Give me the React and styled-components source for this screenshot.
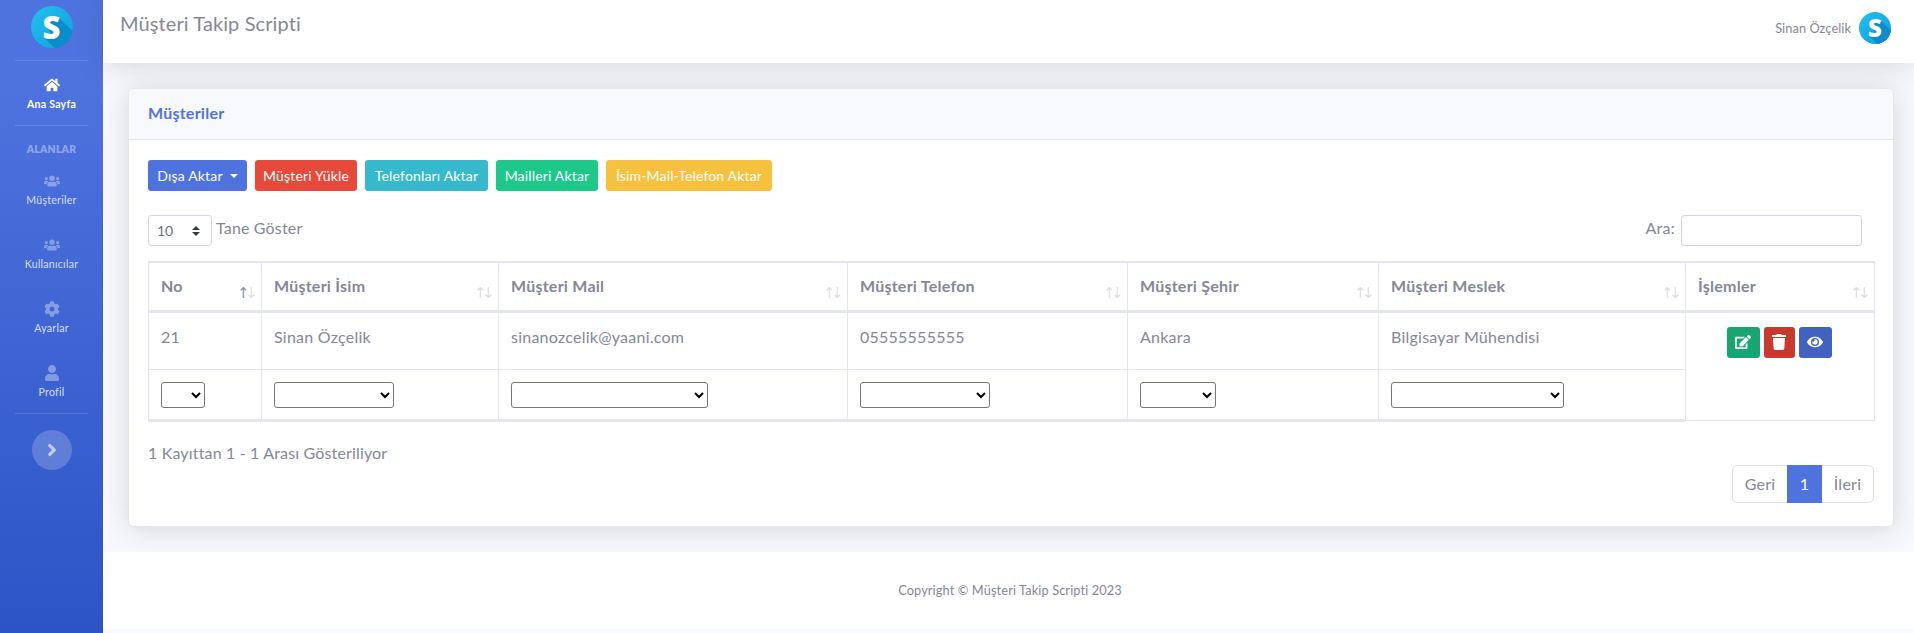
import React from 'react';
import styled, { createGlobalStyle } from 'styled-components';
import { FaHome, FaUsers, FaCog, FaUser, FaAngleRight, FaEdit, FaTrash, FaEye } from 'react-icons/fa';

const Global = createGlobalStyle`
  html, body { margin: 0; padding: 0; }
  body { font-family: "Lato", "Open Sans", "Liberation Sans", sans-serif; font-size: 16px; line-height: 1.5; color: #858796; background: #fff; letter-spacing: .015em; }
  * { box-sizing: border-box; }
`;

const Page = styled.div`display: flex; min-height: 633px; height: 633px; overflow: hidden;`;
const Sidebar = styled.nav`
  width: 103px; flex: none; display: flex; flex-direction: column; align-items: stretch;
  background: linear-gradient(180deg, #4e73df 82px, #224abe 817px);
`;
const Brand = styled.div`height: 60px; display: flex; justify-content: center; padding-top: 6px;`;

const longShadow = Array.from({ length: 34 }, (_, i) => `${i + 1}px ${i + 1}px 0 #0b8ccb`).join(',');
const Logo = styled.div`
  width: ${p => p.$size}px; height: ${p => p.$size}px; border-radius: 50%; overflow: hidden; flex: none;
  background: linear-gradient(135deg, #22c0ec 0%, #0f9fe0 100%);
  display: flex; align-items: center; justify-content: center;
  color: #fff; font-family: "Open Sans", "Liberation Sans", sans-serif; font-weight: 800; letter-spacing: 0;
  font-size: ${p => Math.round(p.$size * 0.74)}px; line-height: 1;
  text-shadow: ${longShadow};
`;
const Divider = styled.hr`margin: 0 15px; border: 0; border-top: 1px solid rgba(255,255,255,.15); height: 0; flex: none;`;
const NavItem = styled.a`
  height: 64px; padding-top: 16px; display: flex; flex-direction: column; align-items: center; flex: none;
  color: ${p => p.$active ? '#fff' : 'rgba(255,255,255,.8)'};
  font-size: 10.6px; line-height: 14px; font-weight: ${p => p.$active ? 700 : 400};
  svg { width: auto; height: 16px; margin-bottom: 4px; color: ${p => p.$active ? '#fff' : 'rgba(255,255,255,.36)'}; }
`;
const NavHeading = styled.div`
  height: 31px; padding-top: 17px; text-align: center; font-size: 10.4px; line-height: 12px; font-weight: 800;
  color: rgba(255,255,255,.4); flex: none;
`;
const Toggle = styled.button`
  width: 40px; height: 40px; border-radius: 50%; border: 0; margin: 16px auto 0; padding: 0; flex: none;
  background: rgba(255,255,255,.2); color: rgba(255,255,255,.6);
  display: flex; align-items: center; justify-content: center;
  svg { width: auto; height: 20px; }
`;

const Main = styled.div`flex: 1; min-width: 0; display: flex; flex-direction: column; background: #f8f9fc;`;
const Topbar = styled.header`
  height: 63px; flex: none; background: #fff; display: flex; justify-content: space-between; align-items: flex-start;
  box-shadow: 0 2.4px 28px rgba(58,59,69,.18); position: relative;
  padding: 0 23px 0 17px;
`;
const Title = styled.h1`margin: 8px 0 0; font-size: 20px; line-height: 30px; font-weight: 400; color: #858796; letter-spacing: .005em;`;
const UserBox = styled.div`display: flex; align-items: center; gap: 8px; margin-top: 12px; font-size: 12.8px; line-height: 32px; color: #858796; letter-spacing: .005em;`;
const Content = styled.main`padding: 25px 20px 25px 25px; flex: none;`;
const Card = styled.section`
  height: 439px; background: #fff; border: 1px solid #e3e6f0; border-radius: 5.6px;
  box-shadow: 0 2.4px 28px rgba(58,59,69,.18); overflow: hidden;
`;
const CardHeader = styled.div`
  height: 51px; background: #f8f9fc; border-bottom: 1px solid #e3e6f0; padding: 0 19px 2px; display: flex; align-items: center;
  color: #4e73df; font-weight: 700; font-size: 16px;
`;
const CardBody = styled.div`padding: 20px 19px;`;
const ButtonRow = styled.div`display: flex; gap: 8px; margin-bottom: 24px;`;
const Btn = styled.button`
  height: 31px; padding: 0 8px; border: 0; border-radius: 3.2px; background: ${p => p.$bg}; color: #fff;
  font: inherit; font-size: 14px; line-height: 31px; width: ${p => p.$w}px; white-space: nowrap; letter-spacing: .012em;
  display: flex; align-items: center; justify-content: center; gap: 7px;
`;
const Caret = styled.span`width: 0; height: 0; border-top: 4.5px solid #fff; border-left: 4.5px solid transparent; border-right: 4.5px solid transparent;`;
const Controls = styled.div`display: flex; justify-content: space-between; align-items: flex-start; height: 46px; padding-right: 12px;`;
const LengthLabel = styled.label`display: flex; align-items: flex-start; gap: 4px; line-height: 26px; color: #858796; letter-spacing: .01em;`;
const LengthSelect = styled.select`
  appearance: none; width: 64px; height: 31px; border: 1px solid #d1d3e2; border-radius: 3.2px; background-color: #fff;
  padding: 0 8px; font: inherit; font-size: 14px; color: #6e707e;
  background-image: url("data:image/svg+xml,%3Csvg xmlns='http://www.w3.org/2000/svg' width='8' height='10'%3E%3Cpath d='M4 0 0 4h8zM0 6h8l-4 4z' fill='%23343a40'/%3E%3C/svg%3E");
  background-repeat: no-repeat; background-position: right 11px center;
`;
const SearchLabel = styled.label`display: flex; align-items: flex-start; gap: 6px; line-height: 26px; color: #858796;`;
const SearchInput = styled.input`width: 181px; height: 31px; border: 1px solid #d1d3e2; border-radius: 3.2px; background: #fff; margin-top: 0;`;

const Table = styled.table`width: 1726px; table-layout: fixed; border-collapse: collapse; border: 1px solid #e3e6f0; border-top-width: 2px;`;
const Th = styled.th`
  position: relative; height: 49px; padding: 11px 12px 0; border: 1px solid #e3e6f0; border-bottom-width: 3px; border-top-width: 2px;
  text-align: left; vertical-align: top; font-size: 16px; line-height: 24px; font-weight: 700; color: #858796;

  &::before, &::after {
    position: absolute; bottom: 9px; width: 8px; text-align: center; font: 400 15px/16px "DejaVu Sans", sans-serif; letter-spacing: 0;
    color: rgba(133,135,150,.3);
  }
  &::before { content: "↑"; right: 16px; color: ${p => p.$sorted ? '#7a92ad' : 'rgba(133,135,150,.3)'}; }
  &::after { content: "↓"; right: 8px; }
`;
const Td = styled.td`height: 58px; padding: 12px; border: 1px solid #e3e6f0; vertical-align: top; line-height: 24px; color: #858796;`;
const ActionCell = styled.td`padding: 14px 0 0; border: 1px solid #e3e6f0; vertical-align: top;`;
const Actions = styled.div`display: flex; justify-content: center; gap: 4px; margin-right: 2px;`;
const IconBtn = styled.button`
  width: ${p => p.$w}px; height: 31px; padding: 0; border: 0; border-radius: 3.2px; background: ${p => p.$bg}; color: #fff;
  display: flex; align-items: center; justify-content: center;
  svg { width: auto; height: 16px; }
`;
const FilterTd = styled.td`height: 51px; padding: 12px 12px 0; border: 1px solid #e3e6f0; border-bottom-width: 3px; vertical-align: top;`;
const FilterSelect = styled.select`display: block; width: ${p => p.$w}px; height: 26px; background: #fff; border: 1px solid #767676; border-radius: 3px; font-size: 13px;`;

const Info = styled.div`margin-top: 19px; line-height: 24px; color: #858796; letter-spacing: .01em;`;
const PagerRow = styled.div`display: flex; justify-content: flex-end; margin-top: 0;`;
const Pager = styled.ul`display: flex; list-style: none; margin: 0; padding: 0; height: 38px; font-size: 16px;`;
const PageItem = styled.li`
  width: ${p => p.$w}px; display: flex; align-items: center; justify-content: center;
  background: ${p => p.$active ? '#4e73df' : '#fff'}; color: ${p => p.$active ? '#fff' : '#858796'};
  border: 1px solid ${p => p.$active ? '#4e73df' : '#dddfeb'};
  &:first-child { border-radius: 5.6px 0 0 5.6px; border-right: 0; }
  &:last-child { border-radius: 0 5.6px 5.6px 0; border-left: 0; }
`;
const Footer = styled.footer`
  height: 77px; flex: none; background: #fff; display: flex; align-items: center; justify-content: center;
  padding-left: 3px; font-size: 12.8px; color: #858796; letter-spacing: .008em;
`;

const cols = [113, 237, 349, 280, 251, 307, 189];
const heads = ['No', 'Müşteri İsim', 'Müşteri Mail', 'Müşteri Telefon', 'Müşteri Şehir', 'Müşteri Meslek', 'İşlemler'];
const row = ['21', 'Sinan Özçelik', 'sinanozcelik@yaani.com', '05555555555', 'Ankara', 'Bilgisayar Mühendisi'];
const filters = [44, 120, 197, 130, 76, 173];
const nav = [[FaUsers, 'Müşteriler'], [FaUsers, 'Kullanıcılar'], [FaCog, 'Ayarlar'], [FaUser, 'Profil']];
const exportsBtns = [['#e74a3b', 'Müşteri Yükle', 102], ['#36b9cc', 'Telefonları Aktar', 123], ['#1cc88a', 'Mailleri Aktar', 102], ['#f6c23e', 'İsim-Mail-Telefon Aktar', 166]];

export default function App() {
  return (
    <Page>
      <Global />
      <Sidebar>
        <Brand><Logo $size={42}>S</Logo></Brand>
        <Divider />
        <NavItem $active><FaHome />Ana Sayfa</NavItem>
        <Divider />
        <NavHeading>ALANLAR</NavHeading>
        {nav.map(([Icon, label]) => <NavItem key={label}><Icon />{label}</NavItem>)}
        <Divider />
        <Toggle aria-label="Menü"><FaAngleRight /></Toggle>
      </Sidebar>
      <Main>
        <Topbar>
          <Title>Müşteri Takip Scripti</Title>
          <UserBox>Sinan Özçelik<Logo $size={32}>S</Logo></UserBox>
        </Topbar>
        <Content>
          <Card>
            <CardHeader>Müşteriler</CardHeader>
            <CardBody>
              <ButtonRow>
                <Btn $bg="#4e73df" $w={99}>Dışa Aktar<Caret /></Btn>
                {exportsBtns.map(([bg, label, w]) => <Btn key={label} $bg={bg} $w={w}>{label}</Btn>)}
              </ButtonRow>
              <Controls>
                <LengthLabel>
                  <LengthSelect defaultValue="10"><option>10</option><option>25</option><option>50</option></LengthSelect>
                  Tane Göster
                </LengthLabel>
                <SearchLabel>Ara:<SearchInput /></SearchLabel>
              </Controls>
              <Table>
                <colgroup>{cols.map((w, i) => <col key={i} width={w} />)}</colgroup>
                <thead>
                  <tr>{heads.map((h, i) => <Th key={h} $sorted={i === 0}>{h}</Th>)}</tr>
                </thead>
                <tbody>
                  <tr>
                    {row.map(c => <Td key={c}>{c}</Td>)}
                    <ActionCell rowSpan={2}>
                      <Actions>
                        <IconBtn $bg="#17a673" $w={33}><FaEdit /></IconBtn>
                        <IconBtn $bg="#c9392d" $w={31}><FaTrash /></IconBtn>
                        <IconBtn $bg="#4262bf" $w={33}><FaEye /></IconBtn>
                      </Actions>
                    </ActionCell>
                  </tr>
                  <tr>{filters.map((w, i) => <FilterTd key={i}><FilterSelect $w={w} aria-label={heads[i]}><option></option></FilterSelect></FilterTd>)}</tr>
                </tbody>
              </Table>
              <Info>1 Kayıttan 1 - 1 Arası Gösteriliyor</Info>
              <PagerRow>
                <Pager>
                  <PageItem $w={55}>Geri</PageItem>
                  <PageItem $w={35} $active>1</PageItem>
                  <PageItem $w={52}>İleri</PageItem>
                </Pager>
              </PagerRow>
            </CardBody>
          </Card>
        </Content>
        <Footer>Copyright © Müşteri Takip Scripti 2023</Footer>
      </Main>
    </Page>
  );
}
